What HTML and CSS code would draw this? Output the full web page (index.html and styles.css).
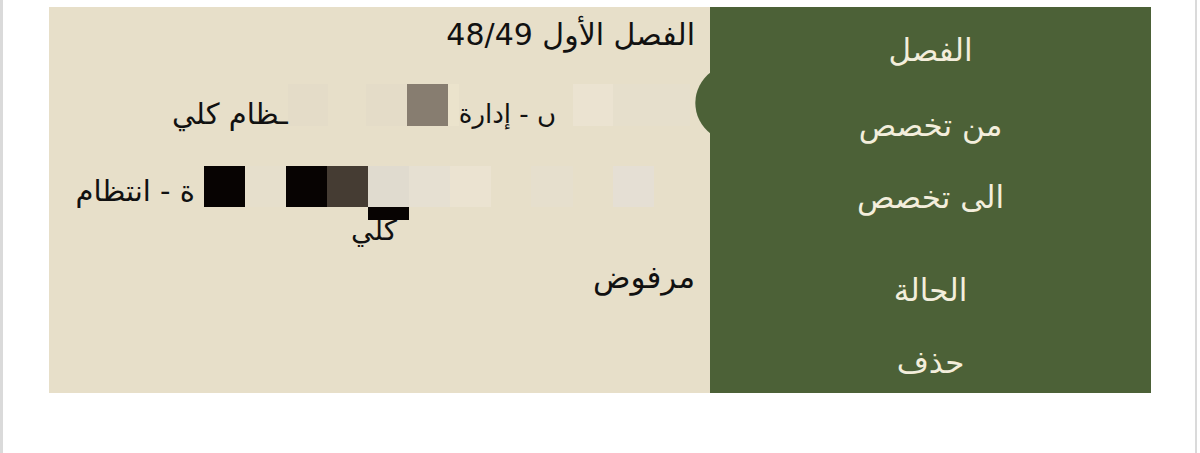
FILE: index.html
```html
<!DOCTYPE html>
<html lang="ar">
<head>
<meta charset="utf-8">
<link rel="stylesheet" href="styles.css">
</head>
<body>
<div class="frame">
  <div class="card">
    <div class="values">
      <div class="row r1"><span class="txt">الفصل الأول 48/49</span></div>
      <div class="row r2">
        <span class="px w77 c-f1"></span>
        <span class="px w40 c-f2"></span>
        <span class="sp w17"></span>
        <span class="txt t-small">ں - إدارة</span>
        <span class="px w11 c-f3"></span>
        <span class="px w41 c-gray"></span>
        <span class="px w41 c-f4"></span>
        <span class="sp w38"></span>
        <span class="px w40 c-f4"></span>
        <span class="txt">ـظام كلي</span>
      </div>
      <div class="row r3">
        <span class="sp w41"></span>
        <span class="px w41 c-f5"></span>
        <span class="sp w40"></span>
        <span class="px w42 c-f6"></span>
        <span class="sp w40"></span>
        <span class="px w41 c-f2"></span>
        <span class="px w41 c-f7"></span>
        <span class="px w41 c-f8 strip"></span>
        <span class="px w41 c-brown"></span>
        <span class="px w41 c-black"></span>
        <span class="px w41 c-f1"></span>
        <span class="px w41 c-black"></span>
        <span class="sp w9"></span>
        <span class="txt">ة - انتظام</span>
      </div>
      <div class="row r3b"><span class="txt">كلي</span></div>
      <div class="row r4"><span class="txt">مرفوض</span></div>
    </div>
    <div class="labels">
      <svg class="notch" width="16" height="62" viewBox="0 0 16 62"><path d="M16 0 A38.5 38.5 0 0 0 16 62 Z" fill="#4c6137"/></svg>
      <div class="label l1">الفصل</div>
      <div class="label l2">من تخصص</div>
      <div class="label l3">الى تخصص</div>
      <div class="label l4">الحالة</div>
      <div class="label l5">حذف</div>
    </div>
  </div>
</div>
</body>
</html>
```

FILE: styles.css
```css
* { box-sizing: border-box; }
html, body { margin: 0; padding: 0; background: #ffffff; }
body {
  width: 1200px;
  height: 453px;
  overflow: hidden;
  font-family: "DejaVu Sans", "Liberation Sans", sans-serif;
}
.frame {
  width: 1197px;
  height: 453px;
  border-left: 3px solid #dadada;
  border-right: 2px solid #dadada;
  padding: 7px 0 0 46px;
}
.card {
  display: flex;
  width: 1102px;
  height: 386px;
}
.values {
  width: 661px;
  background: #e7dfc9;
  direction: rtl;
  padding-right: 15px;
  display: flex;
  flex-direction: column;
  color: #111;
  font-size: 29px;
}
.row {
  display: flex;
  align-items: center;
  direction: rtl;
}
.txt { white-space: nowrap; line-height: 1; }
.r1 { height: 54px; }
.r1 .txt { font-size: 30px; padding-top: 2px; }
.r2 { margin-top: 23px; height: 42px; padding-right: 5px; }
.r2 .txt { padding-top: 18px; }
.r2 .t-small { font-size: 26px; }
.r3 { margin-top: 40px; height: 41px; padding-right: 0; }
.r3 .txt { padding-top: 10px; }
.r3b { height: 40px; padding-right: 298px; }
.r3b .txt { padding-top: 8px; font-size: 28px; }
.r4 { margin-top: 12px; height: 36px; }
.r4 .txt { font-size: 31px; }
.px { display: block; height: 100%; flex: none; }
.sp { display: block; flex: none; height: 1px; }
.strip { position: relative; }
.strip::after {
  content: "";
  position: absolute;
  left: 0; right: 0;
  top: 100%;
  height: 13px;
  background: #070302;
}
.w9 { width: 9px; }
.w11 { width: 11px; }
.w17 { width: 17px; }
.w38 { width: 38px; }
.w40 { width: 40px; }
.w41 { width: 41px; }
.w42 { width: 42px; }
.w77 { width: 77px; }
.c-f1 { background: #e6dfcc; }
.c-f2 { background: #ebe3d1; }
.c-f3 { background: #ebe3cc; }
.c-f4 { background: #e4dcc8; }
.c-f5 { background: #e5dfd4; }
.c-f6 { background: #e6dfcd; }
.c-f7 { background: #e6e0d2; }
.c-f8 { background: #e0dbcf; }
.c-gray { background: #877d70; }
.c-brown { background: #453c33; }
.c-black { background: #070302; }
.labels {
  position: relative;
  width: 441px;
  background: #4c6137;
  display: flex;
  flex-direction: column;
  align-items: center;
  color: #f3eedc;
  font-size: 31px;
  direction: rtl;
}
.notch {
  position: absolute;
  left: -15px;
  top: 65px;
}
.label { height: 40px; line-height: 40px; white-space: nowrap; }
.l1 { margin-top: 23px; }
.l2 { margin-top: 35px; }
.l3 { margin-top: 32px; }
.l4 { margin-top: 53px; }
.l5 { margin-top: 32px; }
```
